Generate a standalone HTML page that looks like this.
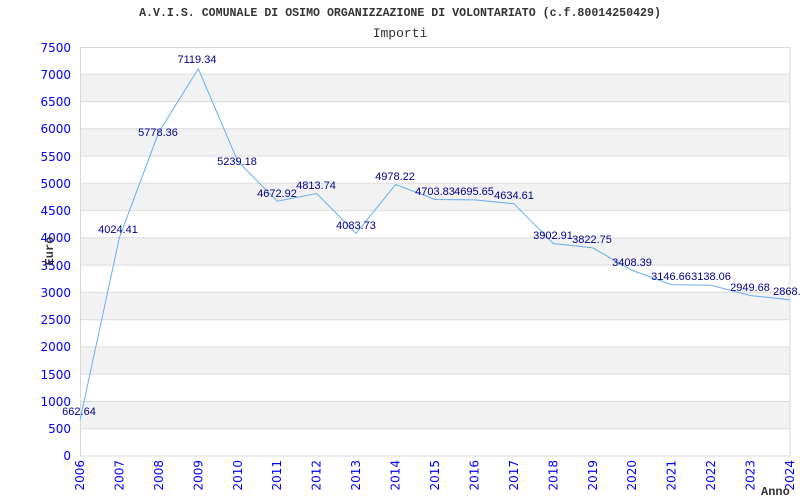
<!DOCTYPE html><html><head><style>body{margin:0;background:#fff}svg{display:block}</style></head><body>
<svg width="800" height="500" xmlns="http://www.w3.org/2000/svg">
<rect width="800" height="500" fill="#fff"/>
<g fill="#f2f2f2">
<rect x="80" y="74.3" width="710" height="27.3"/><rect x="80" y="128.8" width="710" height="27.3"/><rect x="80" y="183.3" width="710" height="27.3"/><rect x="80" y="237.9" width="710" height="27.3"/><rect x="80" y="292.4" width="710" height="27.3"/><rect x="80" y="346.9" width="710" height="27.3"/><rect x="80" y="401.5" width="710" height="27.3"/>
</g>
<g stroke="#dcdcdc" stroke-width="1">
<line x1="80" x2="790" y1="74.3" y2="74.3"/><line x1="80" x2="790" y1="101.6" y2="101.6"/><line x1="80" x2="790" y1="128.8" y2="128.8"/><line x1="80" x2="790" y1="156.1" y2="156.1"/><line x1="80" x2="790" y1="183.3" y2="183.3"/><line x1="80" x2="790" y1="210.6" y2="210.6"/><line x1="80" x2="790" y1="237.9" y2="237.9"/><line x1="80" x2="790" y1="265.1" y2="265.1"/><line x1="80" x2="790" y1="292.4" y2="292.4"/><line x1="80" x2="790" y1="319.7" y2="319.7"/><line x1="80" x2="790" y1="346.9" y2="346.9"/><line x1="80" x2="790" y1="374.2" y2="374.2"/><line x1="80" x2="790" y1="401.5" y2="401.5"/><line x1="80" x2="790" y1="428.7" y2="428.7"/>
</g>
<rect x="80.5" y="47.5" width="709.5" height="408.5" fill="none" stroke="#d8d8d8"/>
<text x="400" y="16" font-family="Liberation Mono,monospace" font-size="11.6" font-weight="bold" fill="#333" text-anchor="middle">A.V.I.S. COMUNALE DI OSIMO ORGANIZZAZIONE DI VOLONTARIATO (c.f.80014250429)</text>
<text x="400" y="37" font-family="Liberation Mono,monospace" font-size="13" fill="#333" text-anchor="middle">Importi</text>
<g font-family="DejaVu Sans,sans-serif" font-size="12" fill="#0000ff" text-anchor="end">
<text x="71" y="52">7500</text><text x="71" y="79">7000</text><text x="71" y="106">6500</text><text x="71" y="133">6000</text><text x="71" y="161">5500</text><text x="71" y="188">5000</text><text x="71" y="215">4500</text><text x="71" y="242">4000</text><text x="71" y="270">3500</text><text x="71" y="297">3000</text><text x="71" y="324">2500</text><text x="71" y="351">2000</text><text x="71" y="379">1500</text><text x="71" y="406">1000</text><text x="71" y="433">500</text><text x="71" y="460">0</text>
</g>
<text transform="translate(53,251) rotate(-90)" font-family="Liberation Mono,monospace" font-size="12" font-weight="bold" fill="#333" text-anchor="middle">Euro</text>
<g font-family="DejaVu Sans,sans-serif" font-size="12" fill="#0000ff" text-anchor="end">
<text transform="translate(84,460) rotate(-90)">2006</text><text transform="translate(123.4,460) rotate(-90)">2007</text><text transform="translate(162.9,460) rotate(-90)">2008</text><text transform="translate(202.3,460) rotate(-90)">2009</text><text transform="translate(241.8,460) rotate(-90)">2010</text><text transform="translate(281.2,460) rotate(-90)">2011</text><text transform="translate(320.7,460) rotate(-90)">2012</text><text transform="translate(360.1,460) rotate(-90)">2013</text><text transform="translate(399.6,460) rotate(-90)">2014</text><text transform="translate(439,460) rotate(-90)">2015</text><text transform="translate(478.4,460) rotate(-90)">2016</text><text transform="translate(517.9,460) rotate(-90)">2017</text><text transform="translate(557.3,460) rotate(-90)">2018</text><text transform="translate(596.8,460) rotate(-90)">2019</text><text transform="translate(636.2,460) rotate(-90)">2020</text><text transform="translate(675.7,460) rotate(-90)">2021</text><text transform="translate(715.1,460) rotate(-90)">2022</text><text transform="translate(754.6,460) rotate(-90)">2023</text><text transform="translate(794,460) rotate(-90)">2024</text>
</g>
<text x="761" y="495" font-family="Liberation Mono,monospace" font-size="12" font-weight="bold" fill="#333">Anno</text>
<polyline fill="none" stroke="#6aaef0" stroke-width="1" points="80,420 119.4,237.5 158.9,131.9 198.3,68.8 237.8,161.3 277.2,201.2 316.7,193.5 356.1,233.4 395.6,184.5 435,199.5 474.4,199.9 513.9,203.7 553.3,243.5 592.8,247.9 632.2,270.4 671.7,284.6 711.1,285.3 750.6,295.6 790,299.7"/>
<g font-family="Liberation Sans,sans-serif" font-size="11" fill="#00008b" text-anchor="middle">
<text x="79" y="415">662.64</text><text x="118" y="233">4024.41</text><text x="158" y="136">5778.36</text><text x="197" y="63">7119.34</text><text x="237" y="165">5239.18</text><text x="277" y="197">4672.92</text><text x="316" y="189">4813.74</text><text x="356" y="229">4083.73</text><text x="395" y="180">4978.22</text><text x="435" y="195">4703.83</text><text x="474" y="195">4695.65</text><text x="514" y="199">4634.61</text><text x="553" y="239">3902.91</text><text x="592" y="243">3822.75</text><text x="632" y="266">3408.39</text><text x="671" y="280">3146.66</text><text x="711" y="280">3138.06</text><text x="750" y="291">2949.68</text><text x="790" y="295">2868.5</text>
</g>
</svg>
</body></html>
